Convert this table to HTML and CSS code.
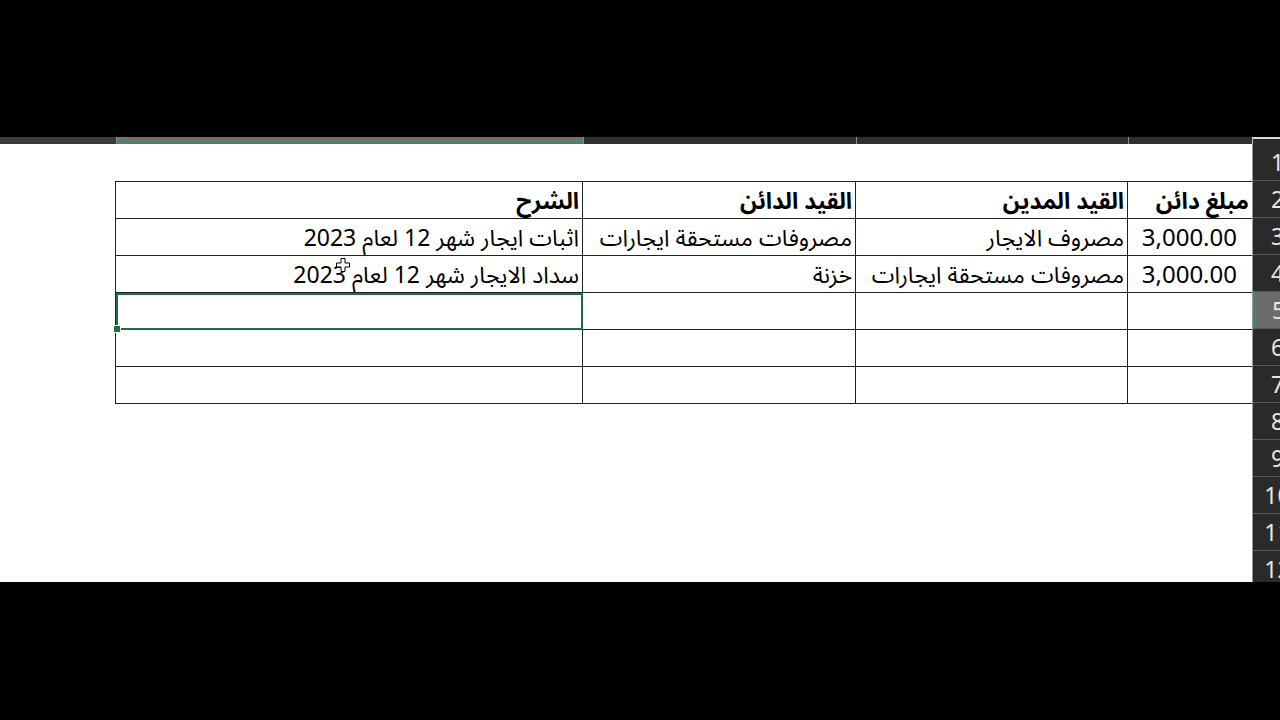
FILE: index.html
```html
<!DOCTYPE html>
<html lang="ar">
<head>
<meta charset="utf-8">
<link rel="stylesheet" href="styles.css">
</head>
<body>
<div class="top"></div>
<div class="sheet">
  <div class="colhdr">
    <div class="ch ch-a"></div>
    <div class="ch ch-sel"></div>
    <div class="ch ch-b"></div>
    <div class="ch ch-c"></div>
    <div class="ch ch-d"></div>
    <div class="ch ch-corner"></div>
  </div>
  <div class="body">
    <div class="grid">
      <div class="spacer-row"></div>
      <table class="ledger" dir="rtl">
        <colgroup>
          <col class="w-amt"><col class="w-deb"><col class="w-cred"><col class="w-desc">
        </colgroup>
        <tr class="head">
          <td>مبلغ دائن</td><td>القيد المدين</td><td>القيد الدائن</td><td>الشرح</td>
        </tr>
        <tr>
          <td class="num">3,000.00</td><td>مصروف الايجار</td><td>مصروفات مستحقة ايجارات</td><td>اثبات ايجار شهر 12 لعام 2023</td>
        </tr>
        <tr>
          <td class="num">3,000.00</td><td>مصروفات مستحقة ايجارات</td><td>خزنة</td><td>سداد الايجار شهر 12 لعام 2023</td>
        </tr>
        <tr>
          <td></td><td></td><td></td><td class="selected"><span class="handle"></span></td>
        </tr>
        <tr><td></td><td></td><td></td><td></td></tr>
        <tr><td></td><td></td><td></td><td></td></tr>
      </table>
      <svg class="cursor" width="14" height="14" viewBox="0 0 14 14">
        <path d="M5 0.5h4v4.5h4.5v4H9v4.5H5V9H0.5V5H5z" fill="#fff" stroke="#000" stroke-width="1"/>
      </svg>
    </div>
    <div class="rowhdr">
      <div class="rh">1</div>
      <div class="rh">2</div>
      <div class="rh">3</div>
      <div class="rh">4</div>
      <div class="rh rh-sel">5</div>
      <div class="rh">6</div>
      <div class="rh">7</div>
      <div class="rh">8</div>
      <div class="rh">9</div>
      <div class="rh">10</div>
      <div class="rh">11</div>
      <div class="rh">12</div>
    </div>
  </div>
</div>
</body>
</html>
```

FILE: styles.css
```css
html, body {
  margin: 0;
  padding: 0;
  background: #000;
  width: 1280px;
  height: 720px;
  overflow: hidden;
  font-family: "Noto Sans", "Noto Sans Arabic", "DejaVu Sans", sans-serif;
}

.top {
  height: 137px;
  background: #000;
}

.sheet {
  height: 445px;
  background: #fff;
  display: flex;
  flex-direction: column;
  overflow: hidden;
}

.colhdr {
  height: 7px;
  display: flex;
  flex: none;
}

.ch {
  height: 7px;
  background: #303030;
  box-sizing: border-box;
  border-left: 1px solid #8a8a8a;
}

.ch-a { width: 116px; border-left: none; background: #3a3a3a; }
.ch-sel {
  width: 467px;
  background: #707070;
  border-bottom: 2px solid #3f8a5d;
}
.ch-b { width: 273px; }
.ch-c { width: 272px; }
.ch-d { width: 124px; }
.ch-corner {
  width: 28px;
  background: #2a2a2a;
  border-top: 2px solid #d8d8d8;
  border-left: 1px solid #bdbdbd;
}

.body {
  flex: 1;
  display: flex;
  overflow: hidden;
}

.grid {
  width: 1252px;
  flex: none;
  position: relative;
  overflow: hidden;
  background: #fff;
}

.spacer-row {
  height: 37px;
}

.ledger {
  direction: rtl;
  border-collapse: collapse;
  table-layout: fixed;
  width: 1137px;
  margin-right: -1px;
  margin-left: auto;
  font-size: 23px;
  color: #000;
}

.w-amt { width: 125px; }
.w-deb { width: 272px; }
.w-cred { width: 273px; }
.w-desc { width: 467px; }

.ledger tr {
  height: 37px;
}

.ledger td {
  height: 37px;
  padding: 0 3px;
  border: 1.6px solid #222;
  text-align: right;
  white-space: nowrap;
  overflow: visible;
  line-height: 34px;
  box-sizing: border-box;
}

.ledger tr.head td {
  font-weight: 700;
}

.ledger td.num {
  padding-right: 15px;
  font-size: 24px;
}

.ledger td.selected {
  position: relative;
  outline: 2px solid #1f6e3d;
  outline-offset: -2px;
}

.handle {
  position: absolute;
  left: -3px;
  bottom: -4px;
  width: 6px;
  height: 6px;
  background: #1f6e3d;
  border: 1px solid #fff;
}

.cursor {
  position: absolute;
  left: 336px;
  top: 114px;
}

.rowhdr {
  width: 50px;
  flex: none;
  background: #2a2a2a;
  border-left: 1px solid #9a9a9a;
  box-sizing: border-box;
}

.rh {
  height: 37px;
  box-sizing: border-box;
  border-bottom: 1px solid #5a5a5a;
  color: #e6e6e6;
  font-size: 23px;
  line-height: 36px;
  text-align: center;
}

.rh-sel {
  background: #6b6b6b;
  border-left: 2px solid #3f8a5d;
}
```
